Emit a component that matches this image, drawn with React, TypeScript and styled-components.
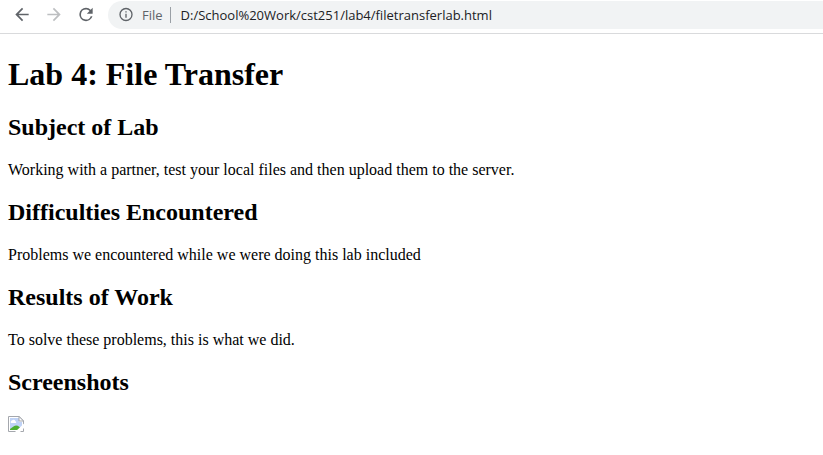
import React from "react";
import styled, { createGlobalStyle } from "styled-components";

const GlobalStyle = createGlobalStyle`
  body {
    margin: 0;
    background: #ffffff;
    color: #000000;
    font-family: "Liberation Serif", "Times New Roman", serif;
    font-size: 16px;
  }
`;

const Toolbar = styled.header`
  display: flex;
  align-items: center;
  gap: 12px;
  box-sizing: border-box;
  height: 34px;
  padding: 0 0 4px 12px;
  border-bottom: 1px solid #d9dadc;
  font-family: "Open Sans", "Segoe UI", sans-serif;
`;

const NavButton = styled.button`
  display: flex;
  align-items: center;
  justify-content: center;
  width: 20px;
  height: 28px;
  padding: 0;
  border: 0;
  background: transparent;
  color: #5f6368;

  &:disabled {
    color: #bdbfc1;
  }
`;

const AddressBar = styled.div`
  display: flex;
  flex: 1;
  align-items: center;
  min-width: 0;
  height: 28px;
  padding-left: 10px;
  border-radius: 14px 0 0 14px;
  background: #f1f3f4;
`;

const InfoButton = styled(NavButton)`
  width: 16px;
`;

const Scheme = styled.label`
  margin-left: 8px;
  padding-right: 7px;
  border-right: 1px solid #9aa0a6;
  color: #5f6368;
  font-size: 13px;
  line-height: 16px;
`;

const UrlInput = styled.input`
  flex: 1;
  min-width: 0;
  height: 28px;
  margin-left: 10px;
  padding: 0;
  border: 0;
  outline: 0;
  background: transparent;
  color: #202124;
  font: inherit;
  font-size: 13px;
`;

const Page = styled.main`
  padding: 21px 8px;
`;

const Title = styled.h1`
  margin: 0 0 21px;
  font-size: 32px;
  line-height: 38px;
`;

const Heading = styled.h2`
  margin: 20px 0;
  font-size: 24px;
  line-height: 27px;
`;

const Paragraph = styled.p`
  margin: 0;
  line-height: 18px;
`;

const Picture = styled.svg`
  display: block;
`;

const sections = [
  {
    title: "Subject of Lab",
    text: "Working with a partner, test your local files and then upload them to the server.",
  },
  {
    title: "Difficulties Encountered",
    text: "Problems we encountered while we were doing this lab included",
  },
  {
    title: "Results of Work",
    text: "To solve these problems, this is what we did.",
  },
];

function Icon({ path, size }: { path: string; size: number }) {
  return (
    <svg width={size} height={size} viewBox="0 0 24 24" fill="currentColor" aria-hidden="true">
      <path d={path} />
    </svg>
  );
}

const BACK = "M20 11H7.83l5.59-5.59L12 4l-8 8 8 8 1.41-1.41L7.83 13H20z";
const FORWARD = "M12 4l-1.41 1.41L16.17 11H4v2h12.17l-5.58 5.59L12 20l8-8z";
const RELOAD =
  "M17.65 6.35A7.96 7.96 0 0 0 12 4a8 8 0 1 0 7.73 10h-2.08A6 6 0 1 1 12 6c1.66 0 3.14.69 4.22 1.78L13 11h7V4z";
const INFO =
  "M11 7h2v2h-2zM11 11h2v6h-2zM12 2a10 10 0 1 0 0 20 10 10 0 0 0 0-20zm0 18a8 8 0 1 1 0-16 8 8 0 0 1 0 16z";

function BrokenImage() {
  return (
    <Picture width="16" height="16" viewBox="0 0 16 16" role="img" aria-label="Missing picture">
      <path d="M.5.5h10.7l4.3 4.3v10.7H.5z" fill="#ffffff" />
      <path d="M2 2h9v4h3v8H2z" fill="#bfd2f6" />
      <path d="M3 7a1.5 1.5 0 0 1 1-2.4 2 2 0 0 1 3.5.7A1.2 1.2 0 0 1 8 7z" fill="#ffffff" />
      <path d="M2 14v-1c2-1 3.5-3.500 6-3.500 2.500 0 4 1.500 6 4.500z" fill="#4cae30" />
      <path d="M.5.5h10.7l4.3 4.3v10.7H.5z" fill="none" stroke="#a4a7ad" />
      <path d="M11 .5V5h4.5z" fill="#ffffff" stroke="#a4a7ad" />
      <path d="M16 7.500v4.500l-4 4H7z" fill="#ffffff" />
    </Picture>
  );
}

export default function App() {
  return (
    <>
      <GlobalStyle />
      <Toolbar>
        <NavButton type="button" aria-label="Back">
          <Icon path={BACK} size={21} />
        </NavButton>
        <NavButton type="button" aria-label="Forward" disabled>
          <Icon path={FORWARD} size={21} />
        </NavButton>
        <NavButton type="button" aria-label="Reload">
          <Icon path={RELOAD} size={21} />
        </NavButton>
        <AddressBar>
          <InfoButton type="button" aria-label="View site information">
            <Icon path={INFO} size={17} />
          </InfoButton>
          <Scheme htmlFor="address">File</Scheme>
          <UrlInput
            id="address"
            type="text"
            spellCheck={false}
            defaultValue="D:/School%20Work/cst251/lab4/filetransferlab.html"
          />
        </AddressBar>
      </Toolbar>
      <Page>
        <Title>Lab 4: File Transfer</Title>
        {sections.map(({ title, text }) => (
          <section key={title}>
            <Heading>{title}</Heading>
            <Paragraph>{text}</Paragraph>
          </section>
        ))}
        <section>
          <Heading>Screenshots</Heading>
          <BrokenImage />
        </section>
      </Page>
    </>
  );
}
